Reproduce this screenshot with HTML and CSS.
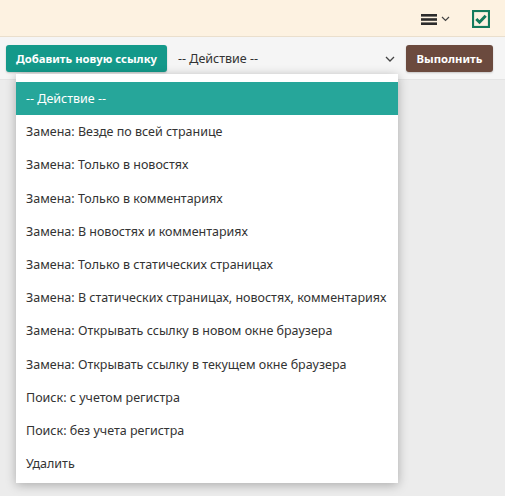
FILE: index.html
```html
<!DOCTYPE html>
<html lang="ru">
<head>
<meta charset="utf-8">
<link rel="stylesheet" href="styles.css">
</head>
<body>
<header class="topbar">
  <div class="menu-toggle">
    <svg width="16" height="11" viewBox="0 0 16 11"><rect x="0" y="0" width="16" height="2.6" fill="#2b2b2b"/><rect x="0" y="4.2" width="16" height="2.6" fill="#2b2b2b"/><rect x="0" y="8.4" width="16" height="2.6" fill="#2b2b2b"/></svg>
    <svg width="9" height="6" viewBox="0 0 9 6"><path d="M1 1l3.5 3.5L8 1" fill="none" stroke="#444" stroke-width="1.2"/></svg>
  </div>
  <div class="check-icon">
    <svg width="18" height="18" viewBox="0 0 18 18"><rect x="1" y="1" width="16" height="16" fill="none" stroke="#137a5c" stroke-width="2.2"/><path d="M4.3 9l3.2 3.2 6.2-6.4" fill="none" stroke="#137a5c" stroke-width="3"/></svg>
  </div>
</header>
<section class="toolbar">
  <button class="btn btn-green">Добавить новую ссылку</button>
  <div class="select">
    <span>-- Действие --</span>
    <svg width="10" height="6" viewBox="0 0 10 6"><path d="M1 1l4 4 4-4" fill="none" stroke="#444" stroke-width="1.3"/></svg>
  </div>
  <button class="btn btn-brown">Выполнить</button>
</section>
<main class="content">
  <ul class="dropdown">
    <li class="active">-- Действие --</li>
    <li>Замена: Везде по всей странице</li>
    <li>Замена: Только в новостях</li>
    <li>Замена: Только в комментариях</li>
    <li>Замена: В новостях и комментариях</li>
    <li>Замена: Только в статических страницах</li>
    <li>Замена: В статических страницах, новостях, комментариях</li>
    <li>Замена: Открывать ссылку в новом окне браузера</li>
    <li>Замена: Открывать ссылку в текущем окне браузера</li>
    <li>Поиск: с учетом регистра</li>
    <li>Поиск: без учета регистра</li>
    <li>Удалить</li>
  </ul>
</main>
</body>
</html>
```
FILE: styles.css
```css
* { box-sizing: border-box; }
html, body { margin: 0; padding: 0; }
body {
  width: 505px;
  height: 496px;
  overflow: hidden;
  background: #ececec;
  font-family: "Noto Sans", "Open Sans", sans-serif;
  font-size: 12.5px;
  color: #333;
  position: relative;
}
.topbar {
  height: 37px;
  background: #fdf2e1;
  border-bottom: 1px solid #eadfcd;
  display: flex;
  align-items: center;
  justify-content: flex-end;
  padding-right: 15px;
  gap: 22px;
}
.menu-toggle { display: flex; align-items: center; gap: 4px; margin-top: 2px; }
.check-icon { display: flex; margin-top: 1px; }
.toolbar {
  height: 43px;
  background: #f5f5f5;
  border-bottom: 1px solid #e4e4e4;
  display: flex;
  align-items: flex-start;
  padding: 8px 12px 0 6px;
}
.btn {
  border: none;
  border-radius: 3px;
  color: #fff;
  font-family: inherit;
  font-weight: bold;
  font-size: 11.3px;
  height: 27px;
  padding: 0;
  white-space: nowrap;
  box-shadow: 0 1px 2px rgba(0,0,0,0.2);
}
.btn-green { background: #14998a; width: 161px; }
.btn-brown { background: #6b4a3e; width: 87px; margin-left: 5px; }
.select {
  flex: 1;
  height: 27px;
  display: flex;
  align-items: center;
  justify-content: space-between;
  padding: 0 6px 0 11px;
  color: #333;
  font-size: 12.5px;
}
.content { position: relative; }
.dropdown {
  position: absolute;
  left: 16px;
  top: -6px;
  width: 382px;
  margin: 0;
  padding: 8px 0 3px;
  list-style: none;
  background: #fff;
  box-shadow: 0 2px 10px rgba(0,0,0,0.28);
}
.dropdown li {
  height: 33.2px;
  line-height: 33px;
  padding-left: 10px;
  white-space: nowrap;
  color: #333;
}
.dropdown li.active { background: #26a69a; color: #fff; }
```
